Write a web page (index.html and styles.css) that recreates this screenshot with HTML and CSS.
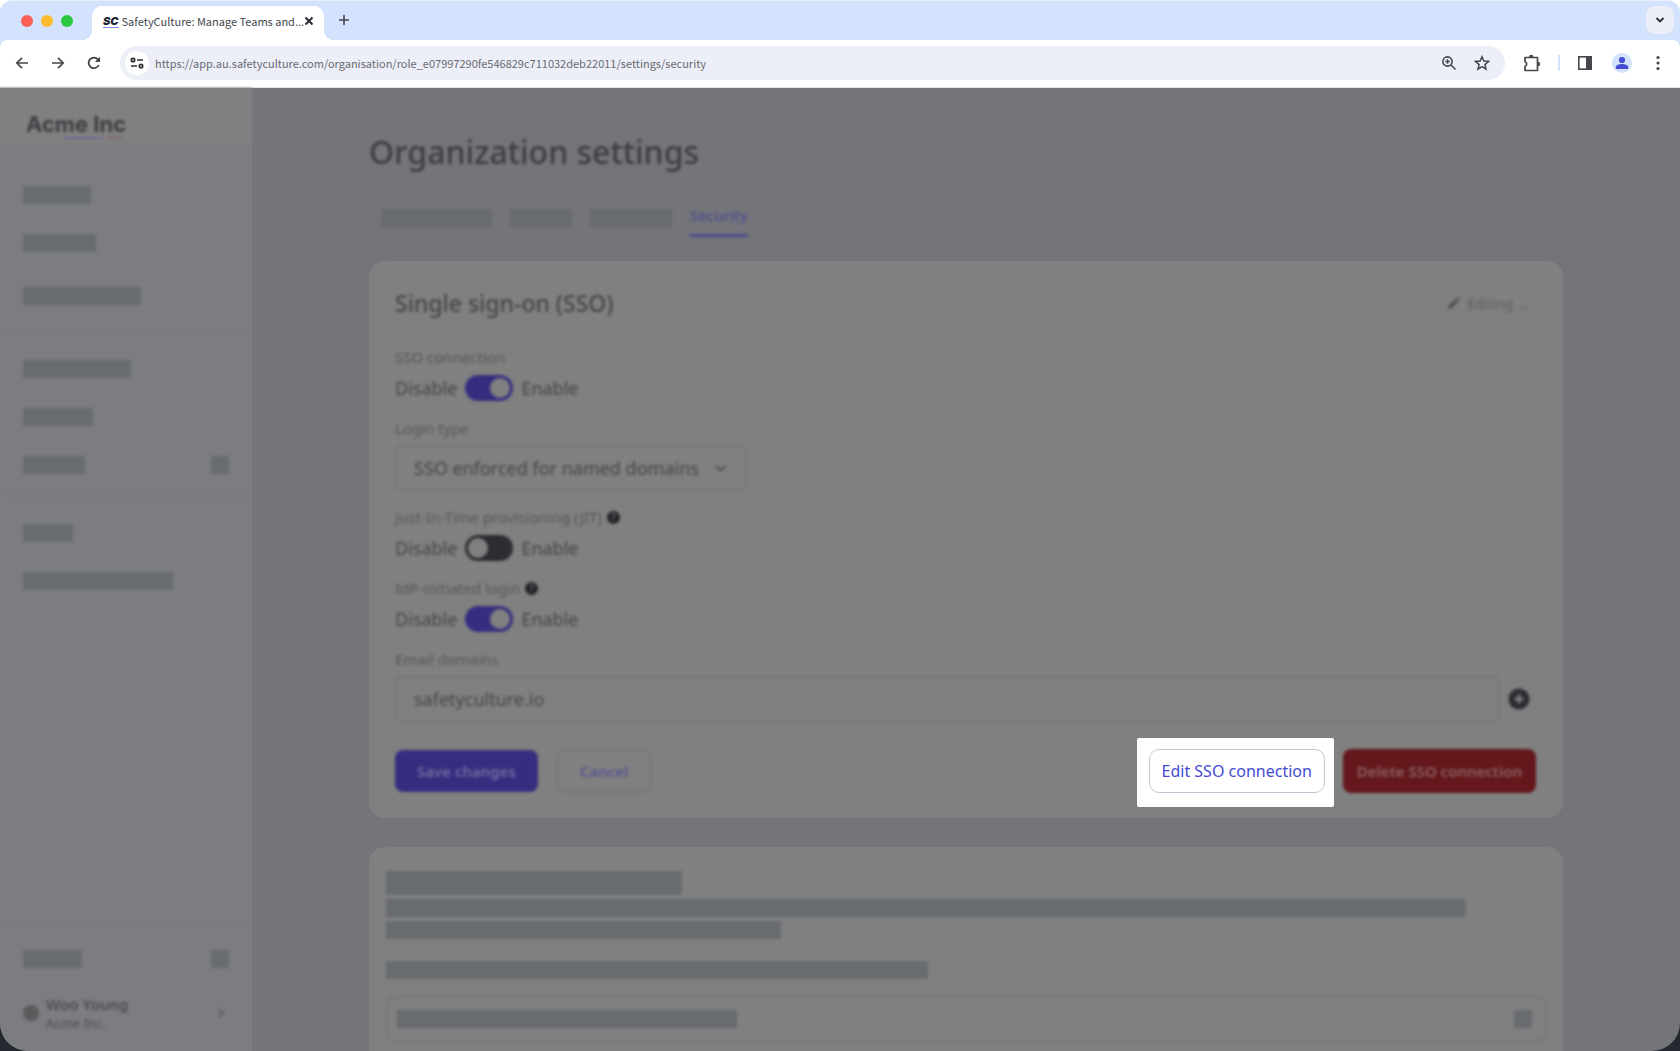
FILE: index.html
```html
<!DOCTYPE html>
<html lang="en">
<head>
    <meta charset="UTF-8">
    <meta name="viewport" content="width=device-width, initial-scale=1.0">
    <title>SafetyCulture: Manage Teams and Organization</title>
    <link rel="stylesheet" href="styles.css">
</head>
<body>
    <div class="window">
        <header class="browser">
            <div class="tab-strip">
                <div class="lights">
                    <span class="light red"></span>
                    <span class="light yellow"></span>
                    <span class="light green"></span>
                </div>
                <div class="tab">
                    <span class="favicon">SC</span>
                    <span class="tab-title">SafetyCulture: Manage Teams and...</span>
                    <button class="icon-btn" aria-label="Close tab">
                        <svg width="10" height="10" viewBox="0 0 10 10"><path d="M1.500 1.500l7 7M8.500 1.500l-7 7" stroke="#2b2d33" stroke-width="2" fill="none"/></svg>
                    </button>
                </div>
                <button class="icon-btn new-tab" aria-label="New tab">
                    <svg width="12" height="12" viewBox="0 0 12 12"><path d="M6 1v10M1 6h10" stroke="#45474c" stroke-width="1.600" fill="none"/></svg>
                </button>
                <button class="icon-btn tab-search" aria-label="Search tabs">
                    <svg width="10" height="8" viewBox="0 0 10 8"><path d="M1.500 2l3.500 3.500L8.500 2" stroke="#2b2d33" stroke-width="1.800" fill="none"/></svg>
                </button>
            </div>
            <div class="toolbar">
                <div class="nav-buttons">
                    <button class="icon-btn" aria-label="Back">
                        <svg width="14" height="14" viewBox="0 0 14 14"><path d="M13 7H2M7 1.800L1.800 7 7 12.200" stroke="#45474c" stroke-width="1.700" fill="none"/></svg>
                    </button>
                    <button class="icon-btn" aria-label="Forward">
                        <svg width="14" height="14" viewBox="0 0 14 14"><path d="M1 7h11M7 1.800L12.200 7 7 12.200" stroke="#45474c" stroke-width="1.700" fill="none"/></svg>
                    </button>
                    <button class="icon-btn" aria-label="Reload">
                        <svg width="14" height="14" viewBox="0 0 14 14"><path d="M11.800 9A5.300 5.300 0 1 1 11 3.500L12 4.800" stroke="#45474c" stroke-width="1.800" fill="none"/><path d="M13 .8v5.200H7.800z" fill="#45474c"/></svg>
                    </button>
                </div>
                <div class="address">
                    <button class="icon-btn site-info" aria-label="Site information">
                        <svg width="14" height="12" viewBox="0 0 14 12" fill="none" stroke="#2b2d33" stroke-width="1.700"><circle cx="3" cy="3" r="1.700"/><path d="M7 3h6M1 9h6"/><circle cx="11" cy="9" r="1.700"/></svg>
                    </button>
                    <input class="url" type="text" aria-label="Address" value="https://app.au.safetyculture.com/organisation/role_e07997290fe546829c711032deb22011/settings/security">
                    <button class="icon-btn" aria-label="Zoom">
                        <svg width="16" height="16" viewBox="0 0 16 16" fill="none" stroke="#45474c" stroke-width="1.600"><circle cx="6.500" cy="6.500" r="4.600"/><path d="M10 10l4.500 4.500M6.500 4.300v4.400M4.300 6.500h4.400"/></svg>
                    </button>
                    <button class="icon-btn" aria-label="Bookmark">
                        <svg width="16" height="16" viewBox="0 0 16 16"><path d="M8 1.800l1.800 4.300 4.700.4-3.600 3.100 1.100 4.600L8 11.700l-4 2.500 1.100-4.600-3.600-3.100 4.700-.4z" fill="none" stroke="#45474c" stroke-width="1.500"/></svg>
                    </button>
                </div>
                <div class="tools">
                    <button class="icon-btn" aria-label="Extensions">
                        <svg width="18" height="18" viewBox="0 0 18 18"><path d="M2 3.500h12.500v13H2v-4.300a2.300 2.300 0 0 0 0-4.400z" fill="none" stroke="#45474c" stroke-width="1.700" stroke-linejoin="round"/><path d="M6 3a2.200 2.200 0 0 1 4.400 0zM15 7.800a2.200 2.200 0 0 1 0 4.400z" fill="#45474c"/></svg>
                    </button>
                    <span class="divider"></span>
                    <button class="icon-btn" aria-label="Side panel">
                        <svg width="16" height="16" viewBox="0 0 16 16"><rect x="1.800" y="1.800" width="12.400" height="12.400" fill="none" stroke="#45474c" stroke-width="1.600"/><path d="M9 1h6v14H9z" fill="#45474c"/></svg>
                    </button>
                    <button class="icon-btn avatar" aria-label="Profile">
                        <svg width="14" height="14" viewBox="0 0 14 14" fill="#444bd3"><circle cx="7" cy="4" r="3.100"/><path d="M.8 13v-2c0-2 3.500-3 6.200-3s6.200 1 6.200 3v2z"/></svg>
                    </button>
                    <button class="icon-btn" aria-label="Menu">
                        <svg width="4" height="16" viewBox="0 0 4 16" fill="#45474c"><circle cx="2" cy="2.500" r="1.600"/><circle cx="2" cy="8" r="1.600"/><circle cx="2" cy="13.500" r="1.600"/></svg>
                    </button>
                </div>
            </div>
        </header>

        <div class="app">
            <aside class="sidebar">
                <div class="logo">
                    <span class="logo-text">Acme Inc</span>
                </div>
                <nav class="menu">
                    <div class="menu-group">
                        <div class="menu-item"><span class="bar w68"></span></div>
                        <div class="menu-item"><span class="bar w73"></span></div>
                        <div class="menu-item tall"><span class="bar w118"></span></div>
                    </div>
                    <div class="menu-group">
                        <div class="menu-item"><span class="bar w108"></span></div>
                        <div class="menu-item"><span class="bar w70"></span></div>
                        <div class="menu-item"><span class="bar w62"></span><span class="bar square"></span></div>
                    </div>
                    <div class="menu-group">
                        <div class="menu-item"><span class="bar w50"></span></div>
                        <div class="menu-item"><span class="bar w150"></span></div>
                    </div>
                </nav>
                <div class="sidebar-footer">
                    <div class="menu-item"><span class="bar w59"></span><span class="bar square"></span></div>
                    <div class="user">
                        <span class="user-photo"></span>
                        <div class="user-text">
                            <div class="user-name">Woo Young</div>
                            <div class="user-org">Acme Inc.</div>
                        </div>
                        <svg width="16" height="16" viewBox="0 0 16 16"><path d="M6 4l4 4-4 4" fill="none" stroke="#5c5d60" stroke-width="2"/></svg>
                    </div>
                </div>
            </aside>

            <main class="main">
                <h1 class="soft">Organization settings</h1>
                <nav class="tabs soft">
                    <span class="bar w111"></span>
                    <span class="bar w62"></span>
                    <span class="bar w82"></span>
                    <a class="active" href="#security">Security</a>
                </nav>

                <section class="card sso" id="security">
                    <div class="card-head soft">
                        <h2>Single sign-on (SSO)</h2>
                        <span class="editing">
                            <svg width="14" height="14" viewBox="0 0 14 14" fill="#4c4e53"><path d="M1 13l.6-3.200L9 2.400 11.600 5l-7.400 7.400zM9.800 1.600L10.800.6 13.400 3.200l-1 1z"/></svg>
                            Editing ...
                        </span>
                    </div>
                    <div class="field soft">
                        <label class="field-label" for="ssoConnection">SSO connection</label>
                        <div class="toggle-row">Disable <input class="toggle" type="checkbox" id="ssoConnection" checked> Enable</div>
                    </div>
                    <div class="field soft">
                        <label class="field-label" for="loginType">Login type</label>
                        <div class="select-wrap">
                            <select id="loginType">
                                <option>SSO enforced for named domains</option>
                            </select>
                            <svg class="select-arrow" width="14" height="14" viewBox="0 0 14 14"><path d="M2 4.500l5 5 5-5" fill="none" stroke="#505155" stroke-width="2"/></svg>
                        </div>
                    </div>
                    <div class="field soft">
                        <label class="field-label" for="jit">Just-In-Time provisioning (JIT) <span class="help">?</span></label>
                        <div class="toggle-row">Disable <input class="toggle" type="checkbox" id="jit"> Enable</div>
                    </div>
                    <div class="field soft">
                        <label class="field-label" for="idpLogin">IdP-initiated login <span class="help">?</span></label>
                        <div class="toggle-row">Disable <input class="toggle" type="checkbox" id="idpLogin" checked> Enable</div>
                    </div>
                    <div class="field soft">
                        <label class="field-label" for="emailDomains">Email domains</label>
                        <div class="domain-row">
                            <input class="text-input" type="text" id="emailDomains" value="safetyculture.io">
                            <button class="icon-btn" aria-label="Add domain">
                                <svg width="22" height="22" viewBox="0 0 22 22"><circle cx="11" cy="11" r="10.500" fill="#2b2d32"/><path d="M11 6.500v9M6.500 11h9" stroke="#808080" stroke-width="2.600"/></svg>
                            </button>
                        </div>
                    </div>
                    <div class="actions">
                        <button class="btn btn-primary soft">Save changes</button>
                        <button class="btn btn-cancel soft">Cancel</button>
                        <div class="spotlight">
                            <button class="btn btn-edit">Edit SSO connection</button>
                        </div>
                        <button class="btn btn-danger soft">Delete SSO connection</button>
                    </div>
                </section>

                <section class="card loading">
                    <span class="bar title"></span>
                    <span class="bar line-long"></span>
                    <span class="bar line-short"></span>
                    <span class="bar line-mid"></span>
                    <div class="loading-box">
                        <span class="bar line-box"></span>
                        <span class="bar square"></span>
                    </div>
                </section>
            </main>
        </div>
    </div>
</body>
</html>
```
FILE: styles.css
```css
* {
    box-sizing: border-box;
}
body {
    margin: 0;
    background: #25282f;
    font-family: "Noto Sans", sans-serif;
    color: #4b4c51;
    overflow: hidden;
}
.window {
    display: flex;
    flex-direction: column;
    height: 100vh;
    border-radius: 0 0 28px 28px;
    overflow: hidden;
}
.icon-btn {
    display: flex;
    align-items: center;
    justify-content: center;
    flex: none;
    padding: 0;
    border: none;
    background: none;
    cursor: pointer;
}

/* Browser */
.browser {
    flex: none;
    background: linear-gradient(#fff 20px, #d3e2fd 20px);
    font-family: "Noto Sans CJK SC", sans-serif;
}
.tab-strip {
    display: flex;
    align-items: flex-end;
    height: 40px;
    padding: 0 6px 0 21px;
    border-top: 1px solid #e9f0fd;
    border-radius: 12px 12px 0 0;
    background: #d3e2fd;
}
.lights {
    display: flex;
    gap: 8px;
    align-self: center;
    width: 71px;
}
.light {
    width: 12px;
    height: 12px;
    border-radius: 50%;
}
.red { background: #fe5f57; }
.yellow { background: #febb2e; }
.green { background: #29c83f; }
.tab {
    position: relative;
    display: flex;
    align-items: center;
    width: 232px;
    height: 34px;
    padding: 0 11px 4px;
    border-radius: 10px 10px 0 0;
    background: #fff;
}
/* flared feet of the active tab */
.tab::before,
.tab::after {
    content: "";
    position: absolute;
    bottom: 0;
    width: 10px;
    height: 10px;
}
.tab::before {
    right: 100%;
    background: radial-gradient(circle at 0 0, #d3e2fd 10px, #fff 10px);
}
.tab::after {
    left: 100%;
    background: radial-gradient(circle at 100% 0, #d3e2fd 10px, #fff 10px);
}
.favicon {
    width: 16px;
    margin-right: 3px;
    border-bottom: 1px solid #7f88ef;
    font: italic 900 11px/12px Inter, sans-serif;
    color: #1f2533;
}
.tab-title {
    flex: 1;
    font-size: 11px;
    white-space: nowrap;
    color: #45474c;
}
.new-tab {
    width: 28px;
    height: 28px;
    margin: 0 auto 6px 6px;
}
.tab-search {
    width: 28px;
    height: 28px;
    margin-bottom: 6px;
    border-radius: 9px;
    background: #eceef8;
}
.toolbar {
    display: flex;
    align-items: center;
    height: 48px;
    padding: 0 20px 2px 15px;
    border-bottom: 1px solid #e3e4e8;
    border-radius: 8px 8px 0 0;
    background: #fff;
}
.nav-buttons {
    display: flex;
    gap: 22px;
    width: 105px;
}
.address {
    display: flex;
    align-items: center;
    gap: 17px;
    flex: 1;
    height: 34px;
    padding: 0 15px 0 5px;
    border-radius: 17px;
    background: #eceef8;
}
.site-info {
    width: 24px;
    height: 24px;
    border-radius: 50%;
    background: #fff;
}
.url {
    flex: 1;
    margin-left: -11px;
    padding: 0;
    border: none;
    background: none;
    font: 11px "Noto Sans CJK SC", sans-serif;
    color: #6a6b70;
}
.tools {
    display: flex;
    align-items: center;
    gap: 17px;
    margin-left: 18px;
}
.divider {
    width: 2px;
    height: 16px;
    background: #d3e2fd;
}
.avatar {
    width: 20px;
    height: 20px;
    border-radius: 50%;
    background: #d3e2fd;
}
.tools .avatar {
    margin: 0 7px 0 2px;
}

/* App */
.app {
    display: flex;
    flex: 1;
    min-height: 0;
    background: #74757a;
}
.soft,
.sidebar > *,
.loading > * {
    filter: blur(1.4px);
}
.bar {
    display: block;
    height: 18px;
    background: #686b6f;
}
.square { width: 18px; }
.w50 { width: 50px; }
.w59 { width: 59px; }
.w62 { width: 62px; }
.w68 { width: 68px; }
.w70 { width: 70px; }
.w73 { width: 73px; }
.w82 { width: 82px; }
.w108 { width: 108px; }
.w111 { width: 111px; }
.w118 { width: 118px; }
.w150 { width: 150px; }

.sidebar {
    display: flex;
    flex-direction: column;
    flex: none;
    width: 252px;
    background: #7c7d80;
}
.logo {
    height: 56px;
    padding: 23px 26px 0;
    background: #808080;
}
.logo-text {
    display: inline-block;
    border-bottom: 2px solid;
    border-image: linear-gradient(90deg, transparent 38%, #6a6b9c 38% 76%, transparent 76% 80%, #85686d 80% 96%, transparent 96%) 1;
    font: 700 22px/26px Inter, sans-serif;
    color: #3c3d41;
}
.menu {
    padding-top: 27px;
}
.menu-group {
    padding-bottom: 6px;
}
.menu-group + .menu-group {
    padding-top: 13px;
    border-top: 1px solid #77787a;
}
.menu-item {
    display: flex;
    align-items: center;
    justify-content: space-between;
    height: 48px;
    padding: 0 23px;
}
.menu-item.tall {
    height: 58px;
}
.sidebar-footer {
    margin-top: auto;
    padding: 8px 0;
    border-top: 1px solid #77787a;
}
.user {
    display: flex;
    align-items: center;
    gap: 7px;
    height: 60px;
    padding: 0 23px;
}
.user-photo {
    width: 16px;
    height: 16px;
    border-radius: 50%;
    background: #5a5b5c;
}
.user-text {
    flex: 1;
}
.user-name {
    font-size: 15px;
    font-weight: 600;
    line-height: 20px;
}
.user-org {
    font-size: 13px;
    line-height: 18px;
}

.main {
    flex: 1;
    padding: 44px 117px 0;
}
h1 {
    margin: 0;
    font-size: 32px;
    font-weight: 500;
    line-height: 40px;
    color: #3c3d40;
}
.tabs {
    display: flex;
    align-items: center;
    gap: 18px;
    height: 38px;
    margin-top: 27px;
    padding-left: 12px;
}
.active {
    align-self: stretch;
    border-bottom: 3px solid #4f4a8c;
    font-size: 15px;
    font-weight: 500;
    line-height: 32px;
    text-decoration: none;
    color: #4f4a8c;
}
.card {
    border-radius: 16px;
    background: #808080;
    box-shadow: 0 0 2px #7a7b7d;
}
.sso {
    margin-top: 24px;
    padding: 26px 27px 25px 26px;
}
.card-head {
    display: flex;
    align-items: center;
    justify-content: space-between;
    height: 32px;
    margin-bottom: 26px;
    padding-right: 8px;
}
h2 {
    margin: 0;
    font-size: 23px;
    font-weight: 500;
    line-height: 30px;
    color: #444549;
}
.editing {
    display: flex;
    align-items: center;
    gap: 6px;
    font-size: 14px;
    color: #5c5d62;
}
.field {
    margin-bottom: 14px;
}
.field-label {
    display: flex;
    align-items: center;
    gap: 5px;
    margin-bottom: 5px;
    font-size: 15px;
    line-height: 24px;
    color: #55565c;
}
.help {
    width: 13px;
    height: 13px;
    border-radius: 50%;
    background: #202226;
    font-size: 10px;
    font-weight: 700;
    line-height: 13px;
    text-align: center;
    color: #66676a;
}
.toggle-row {
    display: flex;
    align-items: center;
    gap: 8px;
    height: 28px;
    font-size: 18px;
    color: #434449;
}
.toggle {
    appearance: none;
    display: flex;
    width: 48px;
    height: 26px;
    margin: 0;
    padding: 3px;
    border-radius: 13px;
    background: #2b2d32;
}
.toggle::before {
    content: "";
    width: 20px;
    height: 20px;
    border-radius: 50%;
    background: #808080;
}
.toggle:checked {
    justify-content: flex-end;
    background: #352e80;
}
.select-wrap {
    position: relative;
    width: 352px;
}
select,
.text-input {
    width: 100%;
    height: 46px;
    padding: 0 17px;
    border: 2px solid #76777b;
    border-radius: 6px;
    background: none;
    font: 18px "Noto Sans", sans-serif;
    color: #434449;
}
select {
    appearance: none;
}
.select-arrow {
    position: absolute;
    top: 16px;
    right: 19px;
}
.domain-row {
    display: flex;
    align-items: center;
    gap: 8px;
    padding-right: 6px;
}
.actions {
    display: flex;
    align-items: center;
    gap: 18px;
    margin-top: 27px;
}
.btn {
    height: 44px;
    border: none;
    border-radius: 8px;
    font: 600 15px "Noto Sans", sans-serif;
    cursor: pointer;
}
.btn-primary {
    height: 42px;
    padding: 0 22px;
    background: #352e80;
    color: #716fa0;
}
.btn-cancel {
    padding: 0 22px;
    border: 2px solid #77787c;
    background: none;
    color: #56528e;
}
.btn-edit {
    position: relative;
    padding: 0 12px;
    border: 1px solid #c3c6d6;
    border-radius: 10px;
    background: #fff;
    font-size: 16px;
    font-weight: 400;
    color: #444bd3;
}
.btn-danger {
    padding: 0 14px;
    background: #64181c;
    color: #8d6264;
}
/* lit area around the highlighted button */
.spotlight {
    position: relative;
    margin-left: auto;
}
.spotlight::before {
    content: "";
    position: absolute;
    inset: -11px -9px -14px -12px;
    border-radius: 2px;
    background: #fff;
}

.loading {
    display: flex;
    flex-direction: column;
    gap: 4px;
    height: 240px;
    margin-top: 29px;
    padding: 24px 16px 24px 17px;
}
.title {
    width: 296px;
    height: 24px;
}
.line-long { width: 93%; }
.line-short { width: 34%; }
.line-mid {
    width: 542px;
    margin-top: 18px;
}
.loading-box {
    display: flex;
    align-items: center;
    justify-content: space-between;
    height: 46px;
    margin-top: 13px;
    padding: 0 13px 0 9px;
    border: 2px solid #77787b;
    border-radius: 8px;
}
.line-box { width: 340px; }
```
